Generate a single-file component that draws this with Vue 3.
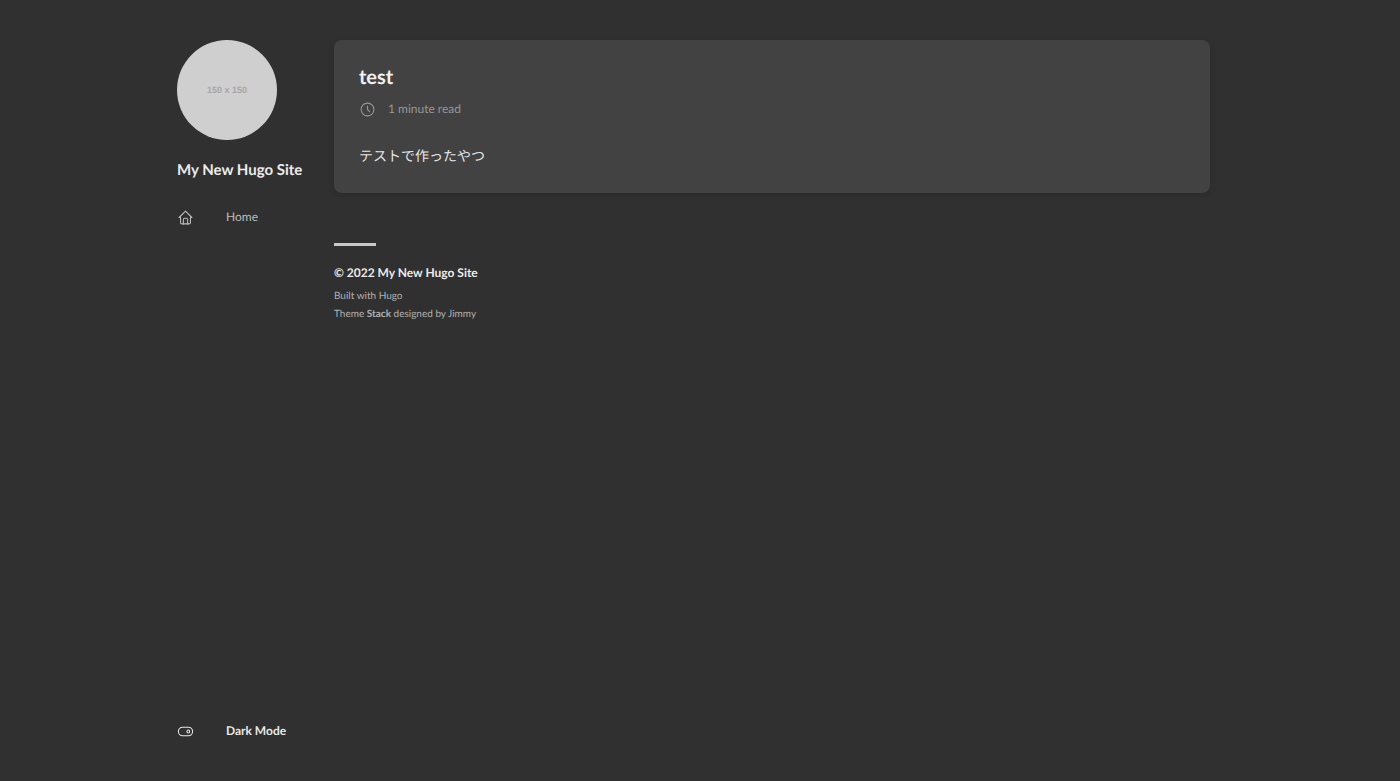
<script setup>
import { ref } from 'vue'

const dark = ref(true)
</script>

<template>
  <div class="page">
    <aside class="sidebar">
      <a class="avatar" href="#" aria-label="Site avatar"><span>150 x 150</span></a>
      <h1 class="site-name"><a href="#">My New Hugo Site</a></h1>
      <nav class="menu">
        <a class="menu-item" href="#">
          <svg class="icon" viewBox="0 0 24 24" aria-hidden="true">
            <polyline points="5 12 3 12 12 3 21 12 19 12" />
            <path d="M5 12v7a2 2 0 0 0 2 2h10a2 2 0 0 0 2-2v-7" />
            <path d="M9 21v-6a2 2 0 0 1 2-2h2a2 2 0 0 1 2 2v6" />
          </svg>
          <span>Home</span>
        </a>
      </nav>
      <button class="menu-item mode" type="button" :aria-pressed="dark" @click="dark = !dark">
        <svg class="icon" viewBox="0 0 24 24" aria-hidden="true">
          <circle cx="16" cy="12" r="2" />
          <rect x="2" y="6" width="20" height="12" rx="6" />
        </svg>
        <span>Dark Mode</span>
      </button>
    </aside>

    <div class="content">
      <main>
        <article class="card">
          <h2><a href="#">test</a></h2>
          <div class="meta">
            <svg class="icon" viewBox="0 0 24 24" aria-hidden="true">
              <circle cx="12" cy="12" r="9" />
              <polyline points="12 7 12 12 15 15" />
            </svg>
            <time>1 minute read</time>
          </div>
          <p lang="ja">テストで作ったやつ</p>
        </article>
      </main>
      <footer class="footer">
        <strong class="copyright">© 2022 My New Hugo Site</strong>
        <span>Built with <a href="#">Hugo</a></span>
        <span>Theme <b>Stack</b> designed by <a href="#">Jimmy</a></span>
      </footer>
    </div>
  </div>
</template>

<style>
body {
  background: #303030;
}
</style>

<style scoped>
.page {
  box-sizing: border-box;
  min-height: 100vh;
  display: flex;
  gap: 25px;
  padding: 40px 190px 41px 177px;
  background: #303030;
  color: #fff;
  font-family: Lato, "Noto Sans CJK JP", sans-serif;
  text-rendering: geometricPrecision;
}

a {
  color: inherit;
  text-decoration: none;
}

.sidebar {
  flex: 0 0 132px;
  min-width: 0;
  display: flex;
  flex-direction: column;
  align-items: flex-start;
}

.avatar {
  width: 100px;
  height: 100px;
  border-radius: 50%;
  background: #cfcfcf;
  color: #a6a6a6;
  display: flex;
  align-items: center;
  justify-content: center;
  font: bold 9px/12px "Liberation Sans", Arial, sans-serif;
}

.site-name {
  margin: 20px 0 0;
  font-size: 15px;
  line-height: 20px;
  font-weight: 700;
  color: #ececec;
  white-space: nowrap;
}

.menu {
  margin-top: 28px;
}

.menu-item {
  display: flex;
  align-items: center;
  gap: 32px;
  font-size: 12px;
  line-height: 18px;
  color: #bdbdbd;
}

.mode {
  margin-top: auto;
  padding: 0;
  border: 0;
  background: none;
  font-family: inherit;
  font-weight: 700;
  color: #e8e8e8;
  cursor: pointer;
  text-rendering: inherit;
}

.icon {
  width: 17px;
  height: 17px;
  flex: none;
  fill: none;
  stroke: currentColor;
  stroke-width: 1.5;
  stroke-linecap: round;
  stroke-linejoin: round;
}

.content {
  flex: 1;
  min-width: 0;
}

.card {
  padding: 25px;
  border-radius: 8px;
  background: #424242;
  box-shadow: 0 2px 6px rgba(0, 0, 0, 0.12);
}

.card h2 {
  margin: 0;
  font-size: 20px;
  line-height: 24px;
  font-weight: 700;
  color: #f0f0f0;
}

.meta {
  display: flex;
  align-items: center;
  gap: 12px;
  margin-top: 11px;
  font-size: 12px;
  line-height: 18px;
  color: #979797;
}

.card p {
  margin: 26px 0 0;
  font-size: 14px;
  line-height: 24px;
  color: #e6e6e6;
}

.footer {
  display: flex;
  flex-direction: column;
  margin-top: 50px;
  font-size: 10px;
  line-height: 18px;
  color: #b0b0b0;
}

.footer::before {
  content: "";
  width: 42px;
  height: 3px;
  margin-bottom: 18px;
  background: #c8c8c8;
}

.copyright {
  margin-bottom: 5px;
  font-size: 12px;
  font-weight: 700;
  color: #ececec;
}
</style>
